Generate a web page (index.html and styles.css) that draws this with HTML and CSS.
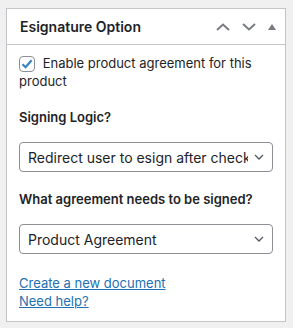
FILE: index.html
```html
<!DOCTYPE html>
<html lang="en">

<head>
    <meta charset="UTF-8">
    <link rel="stylesheet" href="styles.css">
    <title>Esignature Option</title>
</head>

<body>
    <div class="postbox">
        <div class="postbox-header">
            <h2 class="hndle">Esignature Option</h2>
            <div class="handle-actions">
                <!-- move up -->
                <svg width="14" height="8" viewBox="0 0 14 8"><path d="M1 7 L7 1.5 L13 7" fill="none" stroke="#787c82" stroke-width="2"/></svg>
                <!-- move down -->
                <svg width="14" height="8" viewBox="0 0 14 8"><path d="M1 1 L7 6.5 L13 1" fill="none" stroke="#787c82" stroke-width="2"/></svg>
                <!-- toggle -->
                <svg width="8" height="6" viewBox="0 0 8 6"><path d="M0 6 L4 0 L8 6 Z" fill="#787c82"/></svg>
            </div>
        </div>
        <div class="inside">
            <label class="check-row">
                <span class="checkbox">
                    <svg width="14" height="14" viewBox="0 0 14 14"><path d="M2.5 7.2 L5.6 10.2 L11.6 3.2" fill="none" stroke="#3582c4" stroke-width="2.2"/></svg>
                </span>
                <span>Enable product agreement for this product</span>
            </label>

            <p class="field-label">Signing Logic?</p>
            <div class="select-wrap">
                <select>
                    <option>Redirect user to esign after checkout</option>
                </select>
                <svg class="chev" width="10" height="6" viewBox="0 0 10 6"><path d="M1 1 L5 5 L9 1" fill="none" stroke="#50575e" stroke-width="1.3"/></svg>
            </div>

            <p class="field-label">What agreement needs to be signed?</p>
            <div class="select-wrap">
                <select>
                    <option>Product Agreement</option>
                </select>
                <svg class="chev" width="10" height="6" viewBox="0 0 10 6"><path d="M1 1 L5 5 L9 1" fill="none" stroke="#50575e" stroke-width="1.3"/></svg>
            </div>

            <div class="links">
                <a href="#">Create a new document</a>
                <a href="#">Need help?</a>
            </div>
        </div>
    </div>
</body>

</html>
```

FILE: styles.css
```css
@charset "UTF-8";

/* ========BASIC======== */
body {
    margin: 0;
    padding: 8px 7px 8px 6px;
    font-family: Inter, "Noto Sans", sans-serif;
    font-size: 13px;
    line-height: 18px;
    color: #1d2327;
    background: #f0f0f1;
}

a {
    color: #2271b1;
    text-decoration: underline;
}

/* ========POSTBOX======== */
.postbox {
    width: 278px;
    border: 1px solid #c3c4c7;
    background: #fff;
}

.postbox-header {
    display: flex;
    align-items: center;
    justify-content: space-between;
    height: 35px;
    border-bottom: 1px solid #c3c4c7;
}

.hndle {
    margin: 0;
    padding: 0 12px 0 13px;
    font-size: 14px;
    font-weight: 600;
}

.handle-actions {
    display: flex;
    align-items: center;
    gap: 12px;
    padding-right: 9px;
}

.handle-actions svg {
    display: block;
}

/* ========INSIDE======== */
.inside {
    display: flex;
    flex-direction: column;
    padding: 9px 12px 11px 12px;
}

.check-row {
    display: block;
    padding-right: 10px;
}

.checkbox {
    display: inline-flex;
    align-items: center;
    justify-content: center;
    width: 14px;
    height: 14px;
    margin-right: 4px;
    vertical-align: -3px;
    border: 1px solid #8c8f94;
    border-radius: 4px;
}

.field-label {
    margin: 18px 0 16px 0;
    font-weight: 600;
}

.select-wrap {
    position: relative;
}

.select-wrap select {
    display: block;
    width: 100%;
    height: 30px;
    padding: 0 24px 0 8px;
    font-family: inherit;
    font-size: 14px;
    color: #1d2327;
    background: #fff;
    border: 1px solid #8c8f94;
    border-radius: 4px;
    appearance: none;
    -webkit-appearance: none;
}

.select-wrap .chev {
    position: absolute;
    right: 9px;
    top: 12px;
}

.links {
    display: flex;
    flex-direction: column;
    margin-top: 20px;
}
```
